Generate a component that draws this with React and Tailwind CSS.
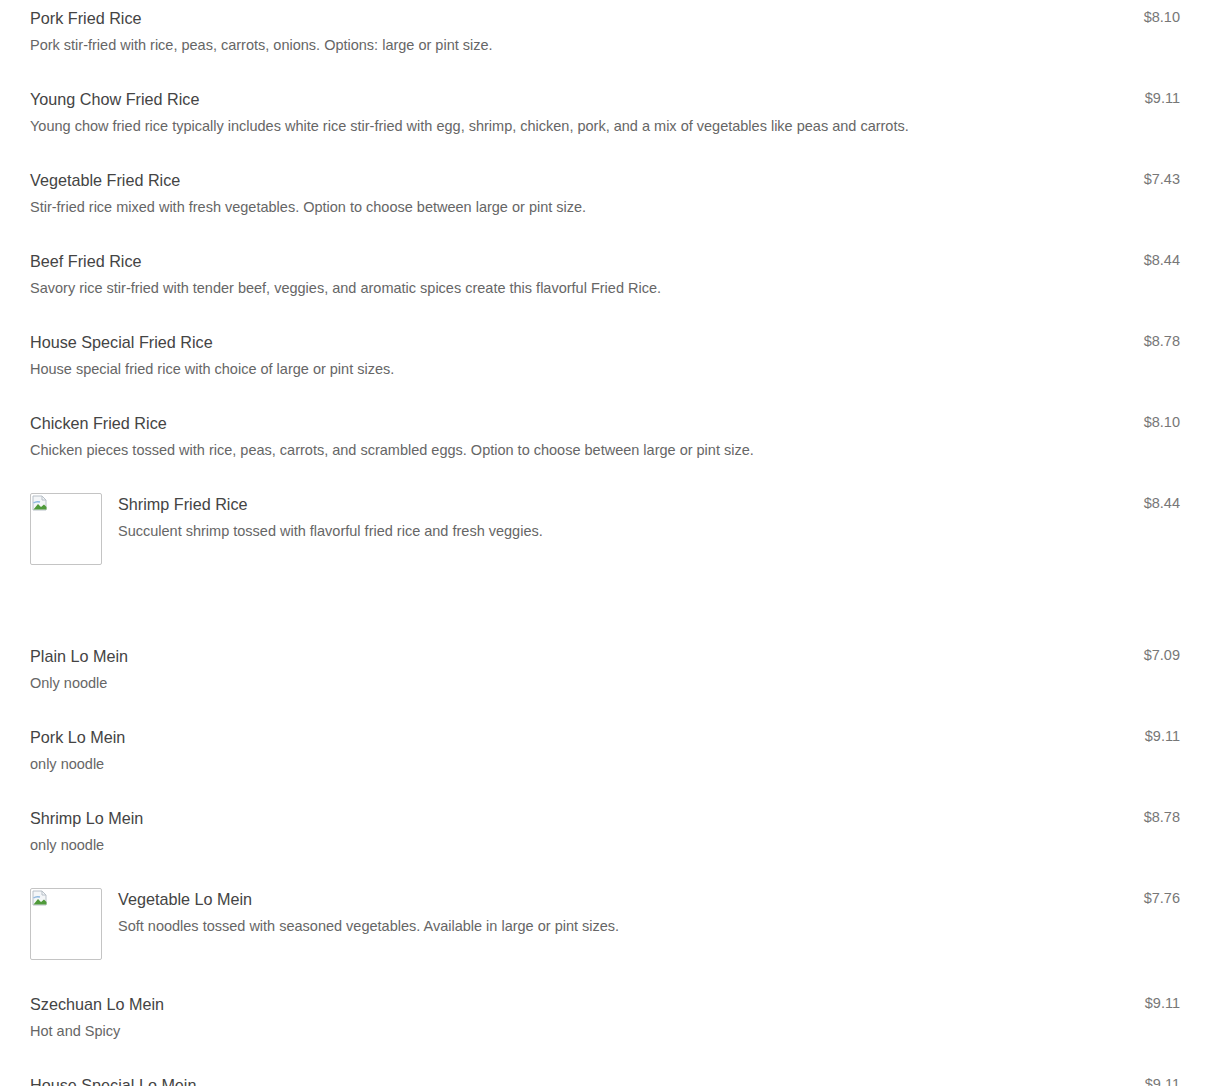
const friedRice = [
  { name: "Pork Fried Rice", desc: "Pork stir-fried with rice, peas, carrots, onions. Options: large or pint size.", price: "$8.10" },
  { name: "Young Chow Fried Rice", desc: "Young chow fried rice typically includes white rice stir-fried with egg, shrimp, chicken, pork, and a mix of vegetables like peas and carrots.", price: "$9.11" },
  { name: "Vegetable Fried Rice", desc: "Stir-fried rice mixed with fresh vegetables. Option to choose between large or pint size.", price: "$7.43" },
  { name: "Beef Fried Rice", desc: "Savory rice stir-fried with tender beef, veggies, and aromatic spices create this flavorful Fried Rice.", price: "$8.44" },
  { name: "House Special Fried Rice", desc: "House special fried rice with choice of large or pint sizes.", price: "$8.78" },
  { name: "Chicken Fried Rice", desc: "Chicken pieces tossed with rice, peas, carrots, and scrambled eggs. Option to choose between large or pint size.", price: "$8.10" },
  { name: "Shrimp Fried Rice", desc: "Succulent shrimp tossed with flavorful fried rice and fresh veggies.", price: "$8.44", img: true },
];

const loMein = [
  { name: "Plain Lo Mein", desc: "Only noodle", price: "$7.09" },
  { name: "Pork Lo Mein", desc: "only noodle", price: "$9.11" },
  { name: "Shrimp Lo Mein", desc: "only noodle", price: "$8.78" },
  { name: "Vegetable Lo Mein", desc: "Soft noodles tossed with seasoned vegetables. Available in large or pint sizes.", price: "$7.76", img: true },
  { name: "Szechuan Lo Mein", desc: "Hot and Spicy", price: "$9.11" },
  { name: "House Special Lo Mein", desc: "", price: "$9.11" },
];

function BrokenImg() {
  return (
    <div className="w-[72px] h-[72px] shrink-0 border border-[#c4c4c4] rounded-[2px] bg-white relative mr-4 -mt-px">
      <svg className="absolute left-[1px] top-[1px]" width="16" height="16" viewBox="0 0 16 16">
        <path d="M1 1h9l4 4v10H1z" fill="#f4f6f8" stroke="#b8c0c8" strokeWidth="1" />
        <path d="M10 1v4h4" fill="none" stroke="#b8c0c8" strokeWidth="1" />
        <path d="M1.5 14.5 L6 9 L9 12 L12 9.5 L14.5 12 V14.5 Z" fill="#4f9a3a" />
        <path d="M1.5 8 C4 6 6 6.5 8 7" fill="none" stroke="#8fb8e0" strokeWidth="1.5" />
      </svg>
    </div>
  );
}

function Item({ it }) {
  return (
    <div className="flex items-start pt-[8px] pb-[26px]">
      {it.img && <BrokenImg />}
      <div className="flex-1 min-w-0">
        <div className="text-[16.2px] leading-[21px] text-[#444444]">{it.name}</div>
        <div className="mt-[6px] text-[14.5px] leading-[20px] text-[#666666]">{it.desc}</div>
      </div>
      <div className="text-[14.5px] leading-[20px] text-[#777777] ml-4 -mt-[1px]">{it.price}</div>
    </div>
  );
}

export default function App() {
  return (
    <div className="bg-white px-[30px] pt-0 h-[1086px] overflow-hidden font-['Liberation_Sans',Arial,sans-serif]">
      {friedRice.map((it) => (
        <Item key={it.name} it={it} />
      ))}
      <div className="h-[47px]" />
      {loMein.map((it) => (
        <Item key={it.name} it={it} />
      ))}
    </div>
  );
}
